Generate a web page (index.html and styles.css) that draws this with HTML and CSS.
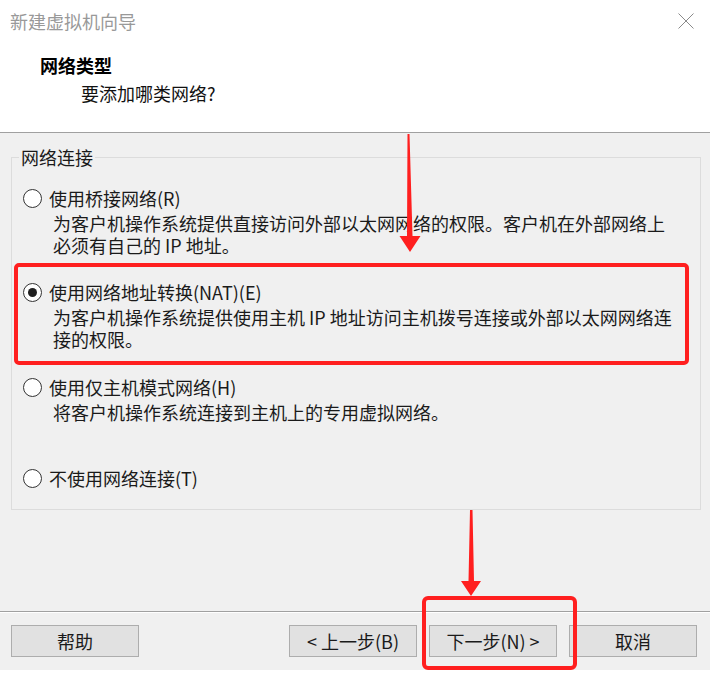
FILE: index.html
```html
<!DOCTYPE html>
<html lang="zh-CN">
<head>
<meta charset="utf-8">
<title>新建虚拟机向导</title>
<link rel="stylesheet" href="styles.css">
</head>
<body>
<div class="window">
  <header class="head">
    <div class="titlebar">
      <span class="title">新建虚拟机向导</span>
      <svg class="close" viewBox="0 0 16 16" aria-hidden="true"><path d="M0.5 0.5 L15.5 15.5 M15.5 0.5 L0.5 15.5" stroke="#8a8a8a" stroke-width="1" fill="none"/></svg>
    </div>
    <div class="h1">网络类型</div>
    <div class="h2">要添加哪类网络?</div>
  </header>
  <main class="main">
    <fieldset class="group">
      <legend>网络连接</legend>
      <div class="opts">
        <div class="opt">
          <div class="row"><span class="radio"></span><span class="lbl">使用桥接网络(R)</span></div>
          <div class="desc">为客户机操作系统提供直接访问外部以太网网络的权限。客户机在外部网络上<br>必须有自己的 IP 地址。</div>
        </div>
        <div class="opt marked">
          <div class="row"><span class="radio on"></span><span class="lbl">使用网络地址转换(NAT)(E)</span></div>
          <div class="desc">为客户机操作系统提供使用主机 IP 地址访问主机拨号连接或外部以太网网络连<br>接的权限。</div>
        </div>
        <div class="opt o3">
          <div class="row"><span class="radio"></span><span class="lbl">使用仅主机模式网络(H)</span></div>
          <div class="desc">将客户机操作系统连接到主机上的专用虚拟网络。</div>
        </div>
        <div class="opt o4">
          <div class="row"><span class="radio"></span><span class="lbl">不使用网络连接(T)</span></div>
        </div>
      </div>
    </fieldset>
  </main>
  <footer class="foot">
    <button class="btn">帮助</button>
    <button class="btn prev">&lt; 上一步(B)</button>
    <button class="btn">下一步(N) &gt;</button>
    <button class="btn">取消</button>
  </footer>
  <svg class="annot" viewBox="0 0 710 678" aria-hidden="true">
    <polygon points="407.5,134 409.5,134 412.5,236 420.5,236 410,252 399.5,236 407,236" fill="#ff1f1f"/>
    <polygon points="470,510 472.5,510 474,581 481,581 471,596 461,581 468.5,581" fill="#ff1f1f"/>
    <rect x="424" y="598" width="151" height="70" rx="4" ry="4" fill="none" stroke="#ff1f1f" stroke-width="4"/>
  </svg>
</div>
</body>
</html>
```

FILE: styles.css
```css
html, body {
  margin: 0;
  padding: 0;
  background: #ffffff;
}

body {
  font-family: "Noto Sans CJK SC", "Noto Sans", sans-serif;
  font-size: 18px;
  color: #1a1a1a;
}

.window {
  position: relative;
  width: 710px;
  height: 670px;
  background: #f0f0f0;
  box-shadow: 0 1px 4px rgba(0, 0, 0, 0.35);
  display: flex;
  flex-direction: column;
}

.head {
  flex: none;
  height: 132px;
  background: #ffffff;
  border-bottom: 1px solid #a0a0a0;
}

.titlebar {
  height: 42px;
  display: flex;
  align-items: center;
  justify-content: space-between;
  padding: 0 16px 0 10px;
}

.title {
  color: #999999;
  line-height: 22px;
}

.close {
  width: 16px;
  height: 16px;
  margin-top: 0;
}

.h1 {
  margin: 12px 0 0 40px;
  line-height: 22px;
  font-weight: 700;
  color: #000000;
}

.h2 {
  margin: 6px 0 0 81px;
  line-height: 22px;
  color: #111111;
}

.main {
  flex: 1;
  padding-top: 14px;
}

.group {
  margin: 0 9px 0 11px;
  padding: 0;
  border: 1px solid #dcdcdc;
  min-width: 0;
}

.group legend {
  margin-left: 7px;
  padding: 0 2px;
  line-height: 20px;
  color: #1a1a1a;
}

.opts {
  padding: 20px 0 20px 0;
}

.opt {
  padding-left: 11px;
}

.row {
  display: flex;
  align-items: center;
  gap: 7px;
  height: 22px;
  line-height: 22px;
  white-space: nowrap;
}

.radio {
  flex: none;
  width: 19px;
  height: 19px;
  box-sizing: border-box;
  border: 1px solid #333333;
  border-radius: 50%;
  background: #ffffff;
  display: flex;
  align-items: center;
  justify-content: center;
}

.radio.on::after {
  content: "";
  width: 9px;
  height: 9px;
  border-radius: 50%;
  background: #1f1f1f;
}

.desc {
  margin-top: 3px;
  padding-left: 30px;
  line-height: 22px;
  white-space: nowrap;
}

.marked {
  margin: 7px 11px 0 2px;
  padding: 14px 0 11px 5px;
  border: 4px solid #ff1f1f;
  border-radius: 5px;
}

.o3 {
  margin-top: 11px;
}

.o4 {
  margin-top: 44px;
}

.foot {
  flex: none;
  box-sizing: border-box;
  height: 59px;
  border-top: 1px solid #a0a0a0;
  box-shadow: inset 0 1px 0 #ffffff;
  padding: 13px 13px 0 11px;
  display: flex;
  align-items: flex-start;
  gap: 12px;
}

.btn {
  width: 128px;
  height: 32px;
  box-sizing: border-box;
  border: 1px solid #adadad;
  background: #e1e1e1;
  font-family: inherit;
  font-size: 18px;
  line-height: 22px;
  color: #1a1a1a;
  padding: 0;
  border-radius: 0;
}

.prev {
  margin-left: auto;
}

.annot {
  position: absolute;
  left: 0;
  top: 0;
  width: 710px;
  height: 678px;
  pointer-events: none;
}
```
